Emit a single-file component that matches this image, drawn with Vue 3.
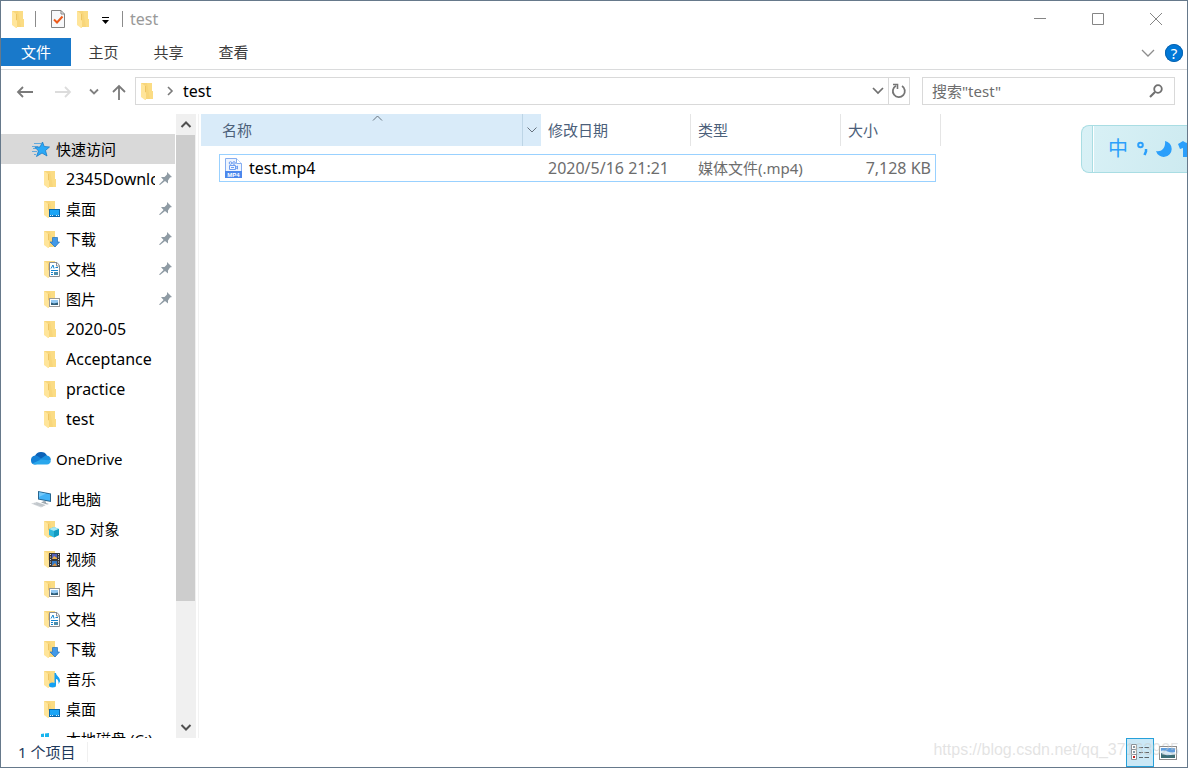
<script setup>
const tabs = ['主页', '共享', '查看']

const quick = [
  { name: '2345Downloads', kind: 'plain', pin: true, latin: true },
  { name: '桌面', kind: 'desktop', pin: true },
  { name: '下载', kind: 'download', pin: true },
  { name: '文档', kind: 'document', pin: true },
  { name: '图片', kind: 'picture', pin: true },
  { name: '2020-05', kind: 'plain', latin: true },
  { name: 'Acceptance', kind: 'plain', latin: true },
  { name: 'practice', kind: 'plain', latin: true },
  { name: 'test', kind: 'plain', latin: true },
]

const computer = [
  { name: '3D 对象', kind: 'objects' },
  { name: '视频', kind: 'video' },
  { name: '图片', kind: 'picture' },
  { name: '文档', kind: 'document' },
  { name: '下载', kind: 'download' },
  { name: '音乐', kind: 'music' },
  { name: '桌面', kind: 'desktop' },
  { name: '本地磁盘 (C:)', kind: 'drive' },
]

const groups = [
  { name: '快速访问', kind: 'star', active: true, items: quick },
  { name: 'OneDrive', kind: 'cloud', items: [] },
  { name: '此电脑', kind: 'pc', items: computer },
]

const files = [
  { name: 'test.mp4', date: '2020/5/16 21:21', type: '媒体文件(.mp4)', size: '7,128 KB' },
]
</script>

<template>
  <div class="window">
    <svg class="defs" aria-hidden="true">
      <symbol id="folder" viewBox="0 -1 18 18">
        <path d="M0 0H11V8H12V16H4L0 13Z" fill="#f8d67a" />
        <path d="M6 0H11V8H12V16H9Z" fill="#fbdc84" />
        <path d="M0 0L3 2L4 3V9L5 10V17H4L0 14Z" fill="#ffe59a" />
        <path d="M4.500 3V9" fill="none" stroke="#eec562" />
      </symbol>
    </svg>

    <header class="titlebar">
      <svg class="ico"><use href="#folder" /></svg>
      <span class="rule rule-a"></span>
      <button class="quick check" aria-label="属性">
        <svg width="16" height="20" viewBox="0 0 16 20">
          <path d="M1.5 1.5H11L14.5 5V18.5H1.5Z" fill="#f7f8fa" stroke="#838383" />
          <path d="M11 1.5V5H14.5" fill="none" stroke="#838383" />
          <path d="M4 10.5L7 13.5L12.5 7.5" fill="none" stroke="#ec5a1b" stroke-width="2" />
        </svg>
      </button>
      <button class="quick new" aria-label="新建文件夹"><svg class="ico"><use href="#folder" /></svg></button>
      <button class="quick more" aria-label="自定义快速访问工具栏">
        <svg width="9" height="8" viewBox="0 0 9 8"><path d="M1 .5H8" stroke="#000" /><path d="M1 3H8L4.500 7Z" fill="#000" /></svg>
      </button>
      <span class="rule rule-b"></span>
      <h1 class="title">test</h1>
      <div class="controls">
        <button aria-label="最小化"><svg width="14" height="14" viewBox="0 0 14 14"><path d="M1 6.5H13" /></svg></button>
        <button aria-label="最大化"><svg width="14" height="14" viewBox="0 0 14 14"><path d="M1.500 1.500H12.500V12.500H1.500Z" /></svg></button>
        <button aria-label="关闭"><svg width="14" height="14" viewBox="0 0 14 14"><path d="M1 1L13 13M13 1L1 13" /></svg></button>
      </div>
    </header>

    <nav class="ribbon">
      <button class="tab file">文件</button>
      <button v-for="t in tabs" :key="t" class="tab">{{ t }}</button>
      <button class="expand" aria-label="展开功能区">
        <svg width="14" height="8" viewBox="0 0 14 8"><path d="M1 1L7 7L13 1" fill="none" stroke="#8d8d8d" stroke-width="1.300" /></svg>
      </button>
      <button class="help" aria-label="帮助">?</button>
    </nav>

    <div class="address-row">
      <div class="nav">
        <button class="arrow" aria-label="后退">
          <svg width="18" height="14" viewBox="0 0 18 14"><path d="M17 7H2M7 2L2 7L7 12" stroke="#7a7a7a" stroke-width="1.800" fill="none" /></svg>
        </button>
        <button class="arrow next" aria-label="前进">
          <svg width="18" height="14" viewBox="0 0 18 14"><path d="M1 7H16M11 2L16 7L11 12" stroke="#dcdcdc" stroke-width="1.800" fill="none" /></svg>
        </button>
        <button class="recent" aria-label="最近浏览的位置">
          <svg width="10" height="8" viewBox="0 0 10 8"><path d="M1 1.500L5 5.500L9 1.500" stroke="#808080" stroke-width="1.800" fill="none" /></svg>
        </button>
        <button class="up" aria-label="上移">
          <svg width="16" height="16" viewBox="0 0 16 16"><path d="M8 16V2M2 8L8 2L14 8" stroke="#7a7a7a" stroke-width="1.800" fill="none" /></svg>
        </button>
      </div>
      <div class="address">
        <svg class="ico"><use href="#folder" /></svg>
        <svg class="crumb-sep" width="8" height="10" viewBox="0 0 8 10"><path d="M2 1L6 5L2 9" stroke="#7a7a7a" stroke-width="1.600" fill="none" /></svg>
        <button class="crumb latin">test</button>
        <button class="drop" aria-label="以前的位置">
          <svg width="12" height="8" viewBox="0 0 12 8"><path d="M1 1L6 6L11 1" stroke="#707070" stroke-width="1.700" fill="none" /></svg>
        </button>
        <button class="refresh" aria-label="刷新">
          <svg width="16" height="16" viewBox="0 0 16 16"><path d="M11 3A6 6 0 1 1 5 2.800" stroke="#757575" stroke-width="1.800" fill="none" /><path d="M2 1.500H6.500V6" stroke="#757575" stroke-width="1.600" fill="none" /></svg>
        </button>
      </div>
      <label class="search">
        <input type="search" placeholder='搜索"test"' aria-label="搜索" />
        <svg width="14" height="14" viewBox="0 0 14 14"><circle cx="9" cy="5" r="3.800" fill="none" stroke="#707070" stroke-width="1.800" /><path d="M6 8L1 13" stroke="#707070" stroke-width="2.200" /></svg>
      </label>
    </div>

    <main class="body">
      <aside class="tree">
        <section v-for="g in groups" :key="g.name" class="group">
          <button class="node root" :class="{ active: g.active }">
            <svg width="20" height="20" viewBox="0 0 20 20" aria-hidden="true">
              <g v-if="g.kind === 'star'">
                <path d="M3 4.500H10M1 7.500H7M2 9.500H5M1 12.500H6M3 15.500H5" stroke="#62a9dc" />
                <path d="M11.500 3L13.200 7.500L18.500 8L14.500 11.500L16 17L11 14L5.500 17.500L7.500 12L4 8.300L9 8Z" fill="#2ba9f7" stroke="#1a7cc7" stroke-width=".8" />
              </g>
              <g v-else-if="g.kind === 'cloud'">
                <path d="M4 7A6.700 6.700 0 0 1 16 6.500L11 12L4 9Z" fill="#0c62b8" />
                <path d="M0 11.500A4.500 4.500 0 0 1 6.500 7L15 13L4 15.500A4 4 0 0 1 0 11.500Z" fill="#1380d6" />
                <path d="M8 11L14.500 6.500A4.600 4.600 0 0 1 19.900 11.200L15 13Z" fill="#1b91e0" />
                <path d="M1.500 14.500L10 10.500L19.800 11.500A3.800 3.800 0 0 1 16 15.500H4A4 4 0 0 1 1.500 14.500Z" fill="#2aa7ec" />
              </g>
              <g v-else>
                <path d="M7 2L20 4.500V13L7 10.500Z" fill="#27658f" />
                <path d="M8 3.200L19 5.300V11.800L8 9.700Z" fill="#43b2f6" />
                <path d="M8 8L15 4.600L8 3.200Z" fill="#74c9fa" />
                <path d="M13 12L15 12.400V14L18 15L16 15.500L10 13.500Z" fill="#9ea8b0" />
                <path d="M0 14.500L6 13L15 16L10 18.500Z" fill="#d3d7db" />
                <path d="M3 14.600L12 17.200M5 13.800L13.500 16.500" stroke="#aeb5ba" stroke-width=".6" />
              </g>
            </svg>
            <span>{{ g.name }}</span>
          </button>
          <button v-for="(it, i) in g.items" :key="i" class="node child">
            <svg class="child-ico" width="18" height="18" viewBox="0 -1 18 18" aria-hidden="true">
              <use v-if="it.kind !== 'drive'" href="#folder" x="0" y="-1" width="18" height="18" />
              <g v-if="it.kind === 'desktop'">
                <rect x="5.500" y="8.500" width="10" height="7" fill="#1aa5f7" stroke="#0a67ac" />
                <path d="M6 14.500H15" stroke="#1580c4" /><path d="M6 14.500H7M8 14.500H9M12 14.500H13M14 14.500H15" stroke="#d5efff" />
              </g>
              <path v-else-if="it.kind === 'download'" d="M8.500 6.500H13.500V11H15.500L11 16L6 11H8.500Z" fill="#4299e8" stroke="#2271b9" stroke-width=".7" />
              <g v-else-if="it.kind === 'document'">
                <path d="M5.500 1.500H13L15.500 4.500V15.500H5.500Z" fill="#fff" stroke="#8a8f94" />
                <path d="M12.500 2V5H15.500" fill="none" stroke="#8a8f94" />
                <path d="M7 7.500L9 4L10 7.500M11.500 6.500H14M7 9.500H14M7 11.500H9M7 13.500H9" stroke="#1684cf" fill="none" />
                <rect x="10" y="11" width="4" height="3" fill="#4c8ead" />
              </g>
              <g v-else-if="it.kind === 'picture'">
                <rect x="5.500" y="7.500" width="10" height="8" fill="#fff" stroke="#9a9a9a" />
                <rect x="7" y="9" width="7" height="5" fill="#94c9f2" />
                <path d="M7 14V11.500L10 12.500L14 11.500V14Z" fill="#315f7a" />
              </g>
              <g v-else-if="it.kind === 'objects'">
                <path d="M5 8L10 6L15 8V14L10 16.500L5 14Z" fill="#30b8dc" />
                <path d="M5 8L10 6L15 8L10 10Z" fill="#a8e8f4" />
                <path d="M10 10L15 8V14L10 16.500Z" fill="#129bc2" />
              </g>
              <g v-else-if="it.kind === 'video'">
                <rect x="5" y="2" width="11" height="14" fill="#38393c" />
                <path d="M6.500 3V15M14.500 3V15" stroke="#ddd" stroke-dasharray="1 1.500" />
                <rect x="8" y="3" width="5" height="5" fill="#5361b9" /><rect x="8" y="10" width="5" height="5" fill="#3579c4" />
                <path d="M8 8L10 5L13 7V8Z" fill="#efb248" /><path d="M8 15L11 12L13 15Z" fill="#d99242" />
              </g>
              <g v-else-if="it.kind === 'music'">
                <path d="M10.500 2H12C12 5 16.500 6 16 10.500L14.500 13C15 10 13.500 8 12 8V14H10.500Z" fill="#14a0f3" />
                <ellipse cx="8.500" cy="14" rx="3.500" ry="2.500" fill="#14a0f3" />
              </g>
              <g v-else-if="it.kind === 'drive'">
                <path d="M-3 3L0 2.500V6H-3ZM1 2.500L5 2V6H1Z" fill="#19b5ee" /><path d="M-3 9H15V14H-3Z" fill="#a9adb0" />
              </g>
            </svg>
            <span class="label" :class="{ latin: it.latin }">{{ it.name }}</span>
            <svg v-if="it.pin" width="14" height="14" viewBox="0 0 14 14" aria-label="已固定">
              <path d="M8 0L13 5L11 5.500L9 8.500V11.500L6 9L1 13L0 12.500L4.500 8L2 5H5.500L8 2.500Z" fill="#8f9ba4" />
            </svg>
          </button>
        </section>
      </aside>
      <div class="scrollbar">
        <button aria-label="向上滚动"><svg width="12" height="9" viewBox="0 0 12 9"><path d="M1.500 7L6 2.500L10.500 7" /></svg></button>
        <div class="track"><div class="thumb"></div></div>
        <button aria-label="向下滚动"><svg width="12" height="9" viewBox="0 0 12 9"><path d="M1.500 2L6 6.500L10.500 2" /></svg></button>
      </div>

      <section class="pane">
        <table class="files">
          <colgroup><col class="c-name" /><col class="c-mid" /><col class="c-mid" /><col class="c-size" /></colgroup>
          <thead>
            <tr>
              <th class="sorted">
                <div class="head">
                  <span>名称</span>
                  <svg class="sort" width="11" height="6" viewBox="0 0 11 6"><path d="M1 5.500L5.500 1L10 5.500" /></svg>
                  <button class="filter" aria-label="筛选名称"><svg width="10" height="6" viewBox="0 0 10 6"><path d="M.5.500L5 5L9.500.500" /></svg></button>
                </div>
              </th>
              <th>修改日期</th>
              <th>类型</th>
              <th>大小</th>
            </tr>
          </thead>
          <tbody>
            <tr v-for="f in files" :key="f.name">
              <td>
                <div class="cell name latin">
                  <svg width="17" height="20" viewBox="0 0 17 20" aria-hidden="true">
                    <path d="M.5.500H11.500L16.500 5.500V19.500H.5Z" fill="#eef4fe" stroke="#86aef0" />
                    <path d="M11.500.500V5.500H16.500" fill="#fff" stroke="#86aef0" />
                    <circle cx="5.500" cy="5" r="1.300" fill="none" stroke="#6d9df0" /><circle cx="9" cy="5" r="1.300" fill="none" stroke="#6d9df0" />
                    <path d="M4.500 7.500H10.500V11.500H4.500ZM6 9.500H9M10.500 9.500L12.500 8V11Z" stroke="#6d9df0" fill="none" />
                    <rect x="0" y="13" width="17" height="7" fill="#4c87ec" />
                    <text x="8.500" y="18.500" text-anchor="middle" class="badge">MP4</text>
                  </svg>
                  <span>{{ f.name }}</span>
                </div>
              </td>
              <td><div class="cell latin">{{ f.date }}</div></td>
              <td><div class="cell">{{ f.type }}</div></td>
              <td><div class="cell size latin">{{ f.size }}</div></td>
            </tr>
          </tbody>
        </table>
      </section>
    </main>

    <footer class="status">
      <span class="count">1 个项目</span>
      <button class="view on" aria-label="详细信息">
        <svg width="20" height="17" viewBox="0 0 20 17">
          <path d="M1.500.500H6.500V15.500H1.500ZM1.500 5.500H6.500M1.500 10.500H6.500" fill="#fff" stroke="#8a9298" />
          <path d="M3 3H5M3 8H5" stroke="#617b8c" stroke-width="1.500" /><path d="M3 13H5" stroke="#c32020" stroke-width="2" />
          <path d="M9 3.500H13M14.500 3.500H19M9 8.500H13M14.500 8.500H19M9 13.500H13M14.500 13.500H19" stroke="#5f676c" />
        </svg>
      </button>
      <button class="view" aria-label="大图标">
        <svg width="18" height="14" viewBox="0 0 18 14">
          <rect x=".5" y=".5" width="17" height="13" fill="#fff" stroke="#8c8c8c" />
          <rect x="2" y="2" width="14" height="10" fill="#5f9ddd" />
          <path d="M2 5C6 3 11 8 16 6V9H2Z" fill="#d8ebf7" /><path d="M2 12V7L8 9.500L16 8.500V12Z" fill="#3d6d73" />
        </svg>
      </button>
      <span class="watermark">https://blog.csdn.net/qq_37163925</span>
    </footer>

    <div class="ime">
      <span class="grip"></span>
      <button class="lang">中</button>
      <svg class="punct" width="12" height="16" viewBox="0 0 12 16"><circle cx="3.500" cy="4" r="2.300" fill="none" stroke="#2b9ffb" stroke-width="2" /><path d="M9 8V10.500L7.500 14" stroke="#2b9ffb" stroke-width="2.500" fill="none" /></svg>
      <svg class="moon" width="16" height="16" viewBox="0 0 16 16"><path d="M9 0A8 8 0 1 1 0 10C5 11.500 10 7 9 0Z" fill="#2b9ffb" /></svg>
      <svg class="shirt" width="20" height="18" viewBox="0 0 20 18"><path d="M0 4L5 1Q10 5 15 1L20 4L18 9L15 8V17H5V8L2 9Z" fill="#2b9ffb" /></svg>
    </div>
  </div>
</template>

<style>
body {
  margin: 0;
  background: #fff;
}
</style>

<style scoped>
.window {
  position: relative;
  display: flex;
  flex-direction: column;
  height: 100vh;
  overflow: hidden;
  box-sizing: border-box;
  border: 1px solid #66798b;
  background: #fff;
  color: #000;
  font: 15px/20px "Noto Sans", "Noto Sans CJK SC", sans-serif;
}
.defs {
  position: absolute;
  width: 0;
  height: 0;
}
button {
  display: flex;
  align-items: center;
  justify-content: center;
  padding: 0;
  border: 0;
  background: none;
  color: inherit;
  font: inherit;
}
.latin {
  font-size: 16px;
}
svg {
  flex: none;
}
.ico {
  display: block;
  width: 18px;
  height: 18px;
}

.titlebar {
  display: flex;
  align-items: center;
  flex: none;
  height: 36px;
  padding: 0 0 1px 11px;
}
.rule {
  width: 1px;
  height: 16px;
  background: #8b8b8b;
}
.rule-a {
  margin: 0 14px 0 5px;
}
.new {
  margin-left: 11px;
}
.more {
  margin: 3px 12px 0 6px;
}
.title {
  margin: 0 0 0 7px;
  color: #999;
  font-size: 16px;
  font-weight: 400;
}
.controls {
  display: flex;
  align-self: stretch;
  margin-left: auto;
  padding-right: 2px;
}
.controls button {
  width: 58px;
}
.controls path {
  fill: none;
  stroke: #858585;
}

.ribbon {
  display: flex;
  flex: none;
  height: 31px;
  border-bottom: 1px solid #dadbdc;
}
.tab {
  width: 65px;
  height: 28px;
  color: #3c3c3c;
}
.tab.file {
  width: 70px;
  background: #1979ca;
  color: #fff;
}
.expand {
  width: 14px;
  height: 30px;
  margin-left: auto;
}
.help {
  width: 18px;
  height: 18px;
  margin: 6px 4px 0 10px;
  border-radius: 50%;
  background: #0078d7;
  box-shadow: inset 0 0 0 1px #0a63ae;
  color: #fff;
  font-size: 15px;
}

.address-row {
  display: flex;
  align-items: center;
  flex: none;
  height: 28px;
  padding: 7px 12px 9px 0;
}
.nav {
  display: flex;
  align-items: center;
  width: 134px;
  box-sizing: border-box;
  padding: 1px 0 0 15px;
}
.next {
  margin-left: 20px;
}
.recent {
  margin-left: 17px;
}
.up {
  margin-left: 12px;
}
.address {
  display: flex;
  align-items: center;
  flex: 1;
  height: 28px;
  box-sizing: border-box;
  padding: 0 0 1px 5px;
  border: 1px solid #d9d9d9;
}
.crumb-sep {
  margin: 0 9px 0 7px;
}
.drop {
  width: 20px;
  height: 26px;
  margin-left: auto;
}
.refresh {
  width: 21px;
  height: 26px;
  border-left: 1px solid #d9d9d9;
}
.search {
  display: flex;
  align-items: center;
  width: 253px;
  height: 28px;
  box-sizing: border-box;
  margin-left: 12px;
  padding: 0 11px 0 9px;
  border: 1px solid #d9d9d9;
}
.search input {
  flex: 1;
  min-width: 0;
  padding: 0;
  border: 0;
  outline: 0;
  background: none;
  font: inherit;
}
.search input::placeholder {
  color: #6d6d6d;
  opacity: 1;
}

.body {
  display: flex;
  flex: 1;
  min-height: 0;
}
.tree {
  width: 175px;
  box-sizing: border-box;
  padding-top: 20px;
  overflow: hidden;
}
.group {
  margin-bottom: 10px;
}
.node {
  justify-content: flex-start;
  width: 174px;
  height: 30px;
  text-align: left;
  white-space: nowrap;
}
.root {
  gap: 5px;
  padding-left: 30px;
}
.active {
  background: #d9d9d9;
}
.child {
  gap: 4px;
  padding-left: 43px;
}
.child-ico {
  overflow: visible;
}
.label {
  width: 89px;
  overflow: hidden;
}
.scrollbar {
  display: flex;
  flex-direction: column;
  width: 20px;
  background: #f0f0f0;
}
.scrollbar button {
  width: 19px;
  height: 21px;
}
.scrollbar path {
  fill: none;
  stroke: #505050;
  stroke-width: 2;
}
.track {
  flex: 1;
}
.thumb {
  width: 19px;
  height: 80%;
  background: #cdcdcd;
}

.pane {
  flex: 1;
  margin-left: 2px;
  padding-left: 2px;
  border-left: 1px solid #f2f2f2;
}
.files {
  width: 740px;
  table-layout: fixed;
  border-collapse: separate;
  border-spacing: 0;
}
.c-name {
  width: 340px;
}
.c-mid {
  width: 150px;
}
.c-size {
  width: 100px;
}
th {
  height: 32px;
  padding: 0 0 0 7px;
  border-right: 1px solid #e5e5e5;
  color: #4c607a;
  font-weight: 400;
  text-align: left;
}
th.sorted {
  padding: 0;
  border-right: 0;
  background: #d9ebf9;
}
.head {
  position: relative;
  display: flex;
  align-items: center;
  height: 32px;
  padding-left: 21px;
}
.sort {
  position: absolute;
  top: 1px;
  left: 171px;
}
.filter {
  width: 19px;
  height: 32px;
  box-sizing: border-box;
  margin-left: auto;
  border-left: 1px solid #bdd5e6;
}
.head path {
  fill: none;
  stroke: #66727e;
}
td {
  padding: 8px 0 0;
  color: #6d6d6d;
}
.cell {
  display: flex;
  align-items: center;
  height: 26px;
  padding-left: 7px;
  border: solid #99d1ff;
  border-width: 1px 0;
}
.name {
  gap: 7px;
  margin-left: 18px;
  padding-left: 5px;
  border-left-width: 1px;
  color: #000;
}
.size {
  justify-content: flex-end;
  margin-right: 5px;
  padding-right: 4px;
  border-right-width: 1px;
}
.badge {
  fill: #fff;
  font: 700 6px "Liberation Sans", sans-serif;
}

.status {
  position: relative;
  display: flex;
  align-items: center;
  flex: none;
  height: 29px;
  padding-right: 5px;
  color: #1e395b;
}
.count {
  margin: 0 auto 2px 0;
  padding: 0 12px 0 17px;
  border-right: 1px solid #f0f0f0;
}
.view {
  width: 28px;
  height: 29px;
  box-sizing: border-box;
}
.view.on {
  border: 1px solid #26a0da;
  background: #cbe8f6;
}
.watermark {
  position: absolute;
  right: 8px;
  bottom: 7px;
  color: rgba(200, 200, 200, 0.5);
  font: 16px/20px "Liberation Sans", Arial, sans-serif;
  pointer-events: none;
}

.ime {
  position: absolute;
  top: 124px;
  right: -1px;
  display: flex;
  align-items: center;
  width: 107px;
  height: 48px;
  box-sizing: border-box;
  overflow: hidden;
  border: 1px solid #a9dde3;
  border-right: 0;
  border-radius: 8px 0 0 8px;
  background: linear-gradient(110deg, #d9f1f6, #cdeaf0);
}
.grip {
  flex: none;
  width: 10px;
  height: 100%;
  border-right: 1px solid #a9dde3;
  box-shadow: 1px 0 #fff;
}
.lang {
  flex: none;
  margin-left: 15px;
  color: #2b9ffb;
  font-size: 20px;
}
.punct {
  margin-left: 9px;
}
.moon {
  margin-left: 7px;
}
.shirt {
  margin-left: 6px;
}
</style>
